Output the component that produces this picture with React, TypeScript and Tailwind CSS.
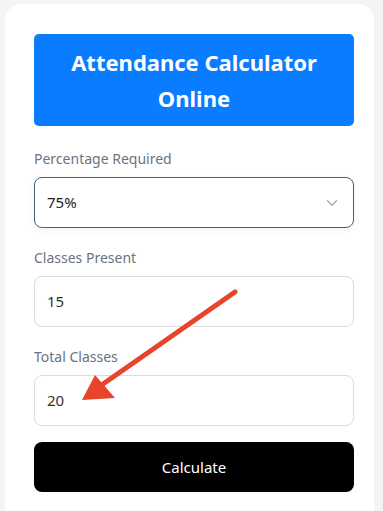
import { ChevronDown } from 'lucide-react';

const Field = ({ label, value }: { label: string; value: string }) => (
  <div className="flex flex-col">
    <label className="text-[14px] text-[#6b7280] mb-[8px] leading-[20px]">{label}</label>
    <div className="h-[51px] rounded-[8px] border border-[#dcdcdc] bg-white flex items-center px-[12px] text-[15px] text-[#333]">
      {value}
    </div>
  </div>
);

const App = () => {
  return (
    <div className="bg-[#f3f4f6] w-[383px] h-[511px] overflow-hidden pt-[4px] pl-[5px]" style={{ fontFamily: '"Noto Sans", "Open Sans", sans-serif' }}>
      <div className="relative bg-white rounded-[16px] w-[369px] h-[530px] pl-[29px] pr-[20px] pt-[30px]">
        <div className="w-[320px] h-[92px] bg-[#0a7cff] rounded-[5px] flex items-center justify-center text-center">
          <h1 className="text-white font-bold text-[22px] leading-[36px]">
            Attendance Calculator
            <br />
            Online
          </h1>
        </div>

        <div className="w-[320px] mt-[23px] flex flex-col gap-[20px]">
          <div className="flex flex-col">
            <label className="text-[14px] text-[#6b7280] mb-[8px] leading-[20px]">Percentage Required</label>
            <div className="h-[51px] rounded-[8px] border border-[#4a5f7a] bg-white shadow-[0_2px_6px_rgba(0,0,0,0.06)] flex items-center justify-between px-[12px] text-[15px] text-[#222]">
              <span>75%</span>
              <ChevronDown className="w-[18px] h-[18px] text-[#a0a4ab]" strokeWidth={1.75} />
            </div>
          </div>
          <Field label="Classes Present" value="15" />
          <Field label="Total Classes" value="20" />
          <button className="h-[50px] -mt-[4px] rounded-[8px] bg-black text-white text-[15px]">Calculate</button>
        </div>

        <svg className="absolute left-0 top-0 pointer-events-none" width="369" height="511" viewBox="0 0 369 511">
          <line x1="230" y1="288" x2="98" y2="380" stroke="#e8432b" strokeWidth="5" strokeLinecap="round" />
          <polygon points="77,396 90,371 110,394" fill="#e8432b" />
        </svg>
      </div>
    </div>
  );
};

export default App;
